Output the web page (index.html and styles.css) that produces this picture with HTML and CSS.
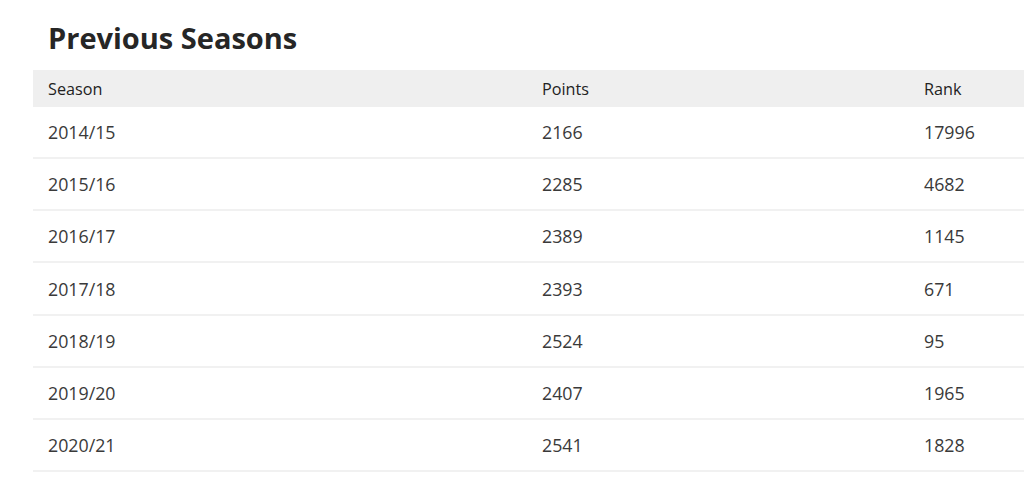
FILE: index.html
```html
<!DOCTYPE html>
<html>
<head>
<meta charset="utf-8">
<link rel="stylesheet" href="styles.css">
</head>
<body>
<section class="seasons">
  <h2 class="seasons-title">Previous Seasons</h2>
  <table class="seasons-table">
    <colgroup>
      <col class="col-season">
      <col class="col-points">
      <col class="col-rank">
    </colgroup>
    <thead>
      <tr><th>Season</th><th>Points</th><th>Rank</th></tr>
    </thead>
    <tbody>
      <tr><td>2014/15</td><td>2166</td><td>17996</td></tr>
      <tr><td>2015/16</td><td>2285</td><td>4682</td></tr>
      <tr><td>2016/17</td><td>2389</td><td>1145</td></tr>
      <tr><td>2017/18</td><td>2393</td><td>671</td></tr>
      <tr><td>2018/19</td><td>2524</td><td>95</td></tr>
      <tr><td>2019/20</td><td>2407</td><td>1965</td></tr>
      <tr><td>2020/21</td><td>2541</td><td>1828</td></tr>
    </tbody>
  </table>
</section>
</body>
</html>
```

FILE: styles.css
```css
html, body {
  margin: 0;
  padding: 0;
  background: #fff;
  overflow: hidden;
}
body {
  font-family: "Open Sans", "Noto Sans", sans-serif;
  color: #333;
}
.seasons {
  padding: 0 0 0 33px;
}
.seasons-title {
  margin: 0;
  padding: 23px 0 0 15px;
  height: 70px;
  box-sizing: border-box;
  font-size: 29px;
  line-height: 29px;
  font-weight: 700;
  color: #262626;
}
.seasons-table {
  width: 1060px;
  border-collapse: separate;
  border-spacing: 0;
  table-layout: fixed;
}
.col-season { width: 494px; }
.col-points { width: 382px; }
.seasons-table th {
  background: #efefef;
  height: 37px;
  box-sizing: border-box;
  padding: 0 0 0 15px;
  text-align: left;
  font-size: 16.2px;
  font-weight: 500;
  color: #222;
}
.seasons-table td {
  height: 52.17px;
  box-sizing: border-box;
  padding: 0 0 0 15px;
  font-size: 17.8px;
  color: #3a3a3a;
  border-bottom: 2px solid #f1f1f1;
}
```
